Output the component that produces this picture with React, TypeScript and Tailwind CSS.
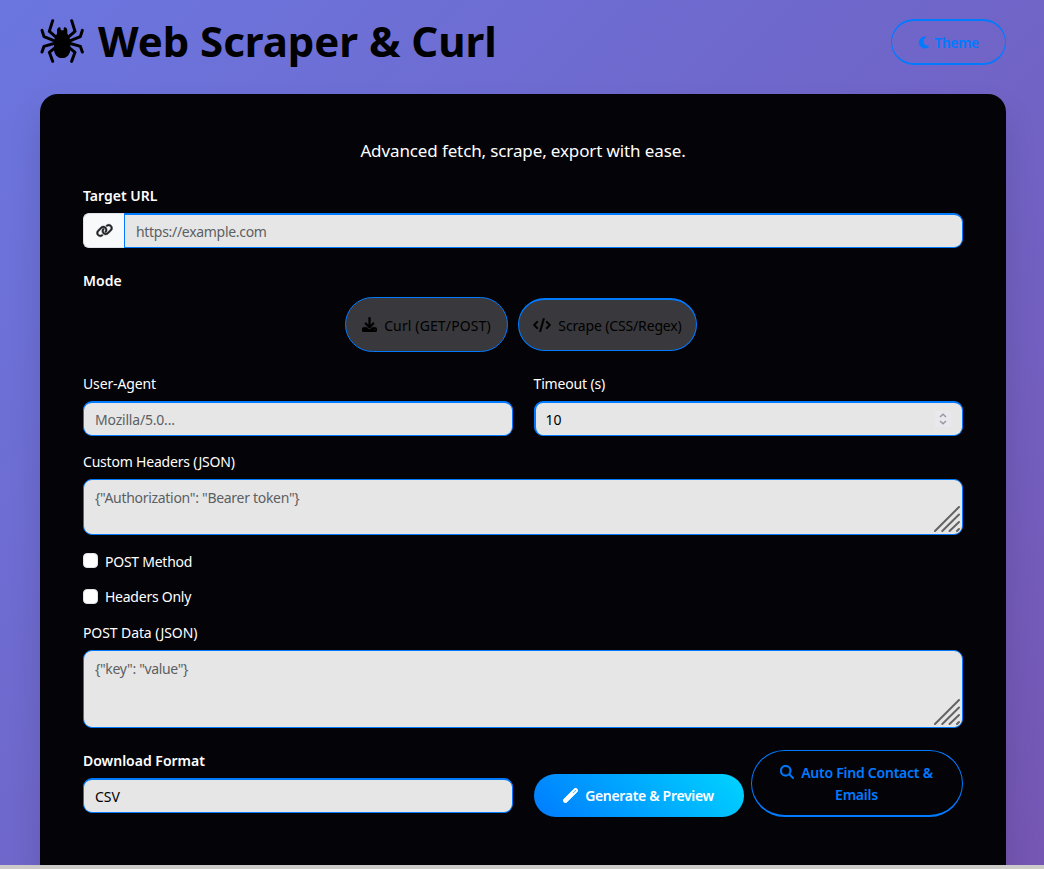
import React from "react";
import { FaMoon, FaLink, FaDownload, FaCode, FaMagnifyingGlass, FaWandMagic } from "react-icons/fa6";

function Spider({ className }: { className: string }) {
  return (
    <svg className={className} viewBox="118 56 132 132" fill="none" stroke="currentColor" strokeWidth="9" strokeLinecap="round" strokeLinejoin="round">
      <path d="M156 61 146 93 168 112M124 90 130 109 165 123M124 155 130 138 165 128M156 183 146 156 168 138" />
      <path d="M213 61 223 93 201 112M245 90 239 109 204 123M245 155 239 138 204 128M213 183 223 156 201 138" />
      <path
        fill="currentColor"
        stroke="none"
        d="M169 100V91C169 85 172 81 177 81 179 81 180 83 180 85V90H189V85C189 83 190 81 192 81 197 81 200 85 200 91V100C205 106 209 116 209 128V145C209 161 200 173 184.500 173S160 161 160 145V128C160 116 164 106 169 100Z"
      />
    </svg>
  );
}

function Label({ children, className = "" }: { children: React.ReactNode; className?: string }) {
  return <label className={`block h-[22px] whitespace-nowrap text-[14px] leading-[22px] text-white ${className}`}>{children}</label>;
}

const field =
  "block w-full rounded-[9px] border border-[#007bff] bg-[#e6e6e6] px-[11px] text-[14px] text-black outline-none placeholder:text-[#5c5f63]";

function Grip() {
  return (
    <svg className="pointer-events-none absolute right-[3px] bottom-[3px] h-[26px] w-[26px]" viewBox="0 0 26 26" stroke="#636363" strokeWidth="2" strokeLinecap="round">
      <path d="M1 25 25 1M8.3 25 25 8.5M15.6 25 25 16M23 25l2-2" />
    </svg>
  );
}

function Area({ placeholder, className }: { placeholder: string; className: string }) {
  return (
    <div className="relative">
      <textarea placeholder={placeholder} className={`${field} resize-none overflow-hidden pt-[7px] leading-[22px] ${className}`} />
      <Grip />
    </div>
  );
}

function Check({ label, box }: { label: string; box: string }) {
  return (
    <label className="flex h-[22px] items-center gap-[7px] text-[14px] leading-[22px] tracking-[-0.25px] text-white">
      <span className={`h-[15px] w-[15px] rounded-[4px] border border-[#dee2e6] bg-white ${box}`} />
      <span>{label}</span>
    </label>
  );
}

export default function App() {
  return (
    <div className="flex h-[869px] flex-col overflow-hidden font-['Noto_Sans',sans-serif]">
      <div className="h-[865px] overflow-hidden bg-[linear-gradient(135deg,#6b76df_0%,#7556b3_100%)] pr-[38px] pl-10">
        <header className="flex h-[94px] items-start justify-between">
          <h1 className="flex h-[82px] items-center text-[42px] font-bold text-black">
            <Spider className="h-[44px] w-[44px]" />
            <span className="-mt-[1px] ml-[14px] tracking-[-0.05px] whitespace-nowrap">Web Scraper &amp; Curl</span>
          </h1>
          <button className="mt-[19px] flex h-[46px] w-[115px] items-center justify-center gap-[4px] rounded-full border border-t-2 border-b-2 border-[#007bff] text-[14px] font-semibold text-[#007bff]">
            <FaMoon className="h-[13px] w-[12px]" stroke="currentColor" strokeWidth="25" />
            <span className="pt-px tracking-[-0.4px]">Theme</span>
          </button>
        </header>
        <main className="h-[900px] rounded-[18px] bg-[#040308] px-[43px] pt-[43px] shadow-[0_18px_32px_rgba(0,0,0,0.13)]">
          <p className="h-[27px] text-center text-[17px] leading-[27px] tracking-[-0.12px] text-white"><span>Advanced fetch, scrape, export with ease.</span></p>
          <Label className="mt-[21px] font-semibold">Target URL</Label>
          <div className="mt-[6px] flex h-[35px]">
            <div className="flex w-[41px] shrink-0 items-center justify-center rounded-l-[6px] border border-r-0 border-[#dee2e6] bg-[#f8f9fa] text-[#212529]">
              <FaLink className="h-[17px] w-[17px]" stroke="currentColor" strokeWidth="18" />
            </div>
            <input placeholder="https://example.com" className={`${field} rounded-l-none border-t-2 tracking-[-0.3px]`} />
          </div>
          <Label className="mt-[22px] font-semibold">Mode</Label>
          <div className="mt-[5px] flex h-[55px] items-center justify-center gap-[10px] pr-[4px] text-[14px] text-black">
            <button className="flex h-[55px] w-[163px] items-center justify-center gap-[7px] rounded-full border border-[#007bff] bg-[#39383c]">
              <FaDownload className="h-[15px] w-[15px]" stroke="currentColor" strokeWidth="12" />
              <span className="pt-px tracking-[0.13px]">Curl (GET/POST)</span>
            </button>
            <button className="flex h-[53px] w-[179px] items-center justify-center gap-[7px] rounded-full border border-t-2 border-[#007bff] bg-[#39383c]">
              <FaCode className="h-[14px] w-[18px]" stroke="currentColor" strokeWidth="12" />
              <span className="pt-px tracking-[-0.15px]">Scrape (CSS/Regex)</span>
            </button>
          </div>
          <div className="mt-[21px] grid grid-cols-2 gap-[21px]">
            <div>
              <Label className="tracking-[-0.15px]">User-Agent</Label>
              <input placeholder="Mozilla/5.0..." className={`${field} mt-[6px] h-[35px] border-t-2 tracking-[-0.2px]`} />
            </div>
            <div>
              <Label className="tracking-[-0.15px]">Timeout (s)</Label>
              <div className="relative mt-[6px]">
                <input defaultValue="10" className={`${field} h-[35px] border-t-2 border-l-2 pl-[10px]`} />
                <div className="absolute top-[10px] right-[12px] flex h-4 w-4 items-center justify-center bg-[#e9e9ed]">
                  <svg className="h-[12px] w-[8px]" viewBox="0 0 8 12" fill="none" stroke="#96969e" strokeWidth="1.5">
                    <path d="M1 4 4 1.3 7 4M1 8l3 2.7L7 8" />
                  </svg>
                </div>
              </div>
            </div>
          </div>
          <Label className="mt-[15px] tracking-[-0.2px]">Custom Headers (JSON)</Label>
          <div className="mt-[6px]">
            <Area placeholder={'{"Authorization": "Bearer token"}'} className="h-[56px] tracking-[-0.3px]" />
          </div>
          <div className="mt-[16px] flex flex-col gap-[13px]">
            <Check label="POST Method" box="mb-[4px]" />
            <Check label="Headers Only" box="mb-[2px]" />
          </div>
          <Label className="mt-[14px] tracking-[-0.1px]">POST Data (JSON)</Label>
          <div className="mt-[6px]">
            <Area placeholder={'{"key": "value"}'} className="h-[78px] tracking-[-0.35px]" />
          </div>
          <div className="mt-[22px] grid grid-cols-2 gap-[21px]">
            <div>
              <Label className="font-semibold">Download Format</Label>
              <div className={`${field} mt-[6px] flex h-[35px] items-center border-t-2`}>CSV</div>
            </div>
            <div className="flex h-[67px] items-end gap-[7px] text-[14px] font-semibold">
              <button className="flex h-[43px] w-[210px] items-center justify-center gap-[7px] rounded-full bg-[linear-gradient(45deg,#007bff,#00d4ff)] text-white">
                <FaWandMagic className="h-[15px] w-[15px]" stroke="currentColor" strokeWidth="25" />
                <span className="tracking-[-0.32px]">Generate &amp; Preview</span>
              </button>
              <button className="h-[67px] w-[212px] rounded-[34px] border border-b-2 border-[#007bff] pt-[2px] text-center leading-[22px] text-[#007bff]">
                <FaMagnifyingGlass className="-mt-[4px] mr-[7px] inline h-[14px] w-[14px]" stroke="currentColor" strokeWidth="12" />
                <span className="tracking-[-0.24px]">Auto Find Contact &amp;<br />Emails</span>
              </button>
            </div>
          </div>
        </main>
      </div>
      <div className="h-1 bg-[#cdcaca]" />
    </div>
  );
}
